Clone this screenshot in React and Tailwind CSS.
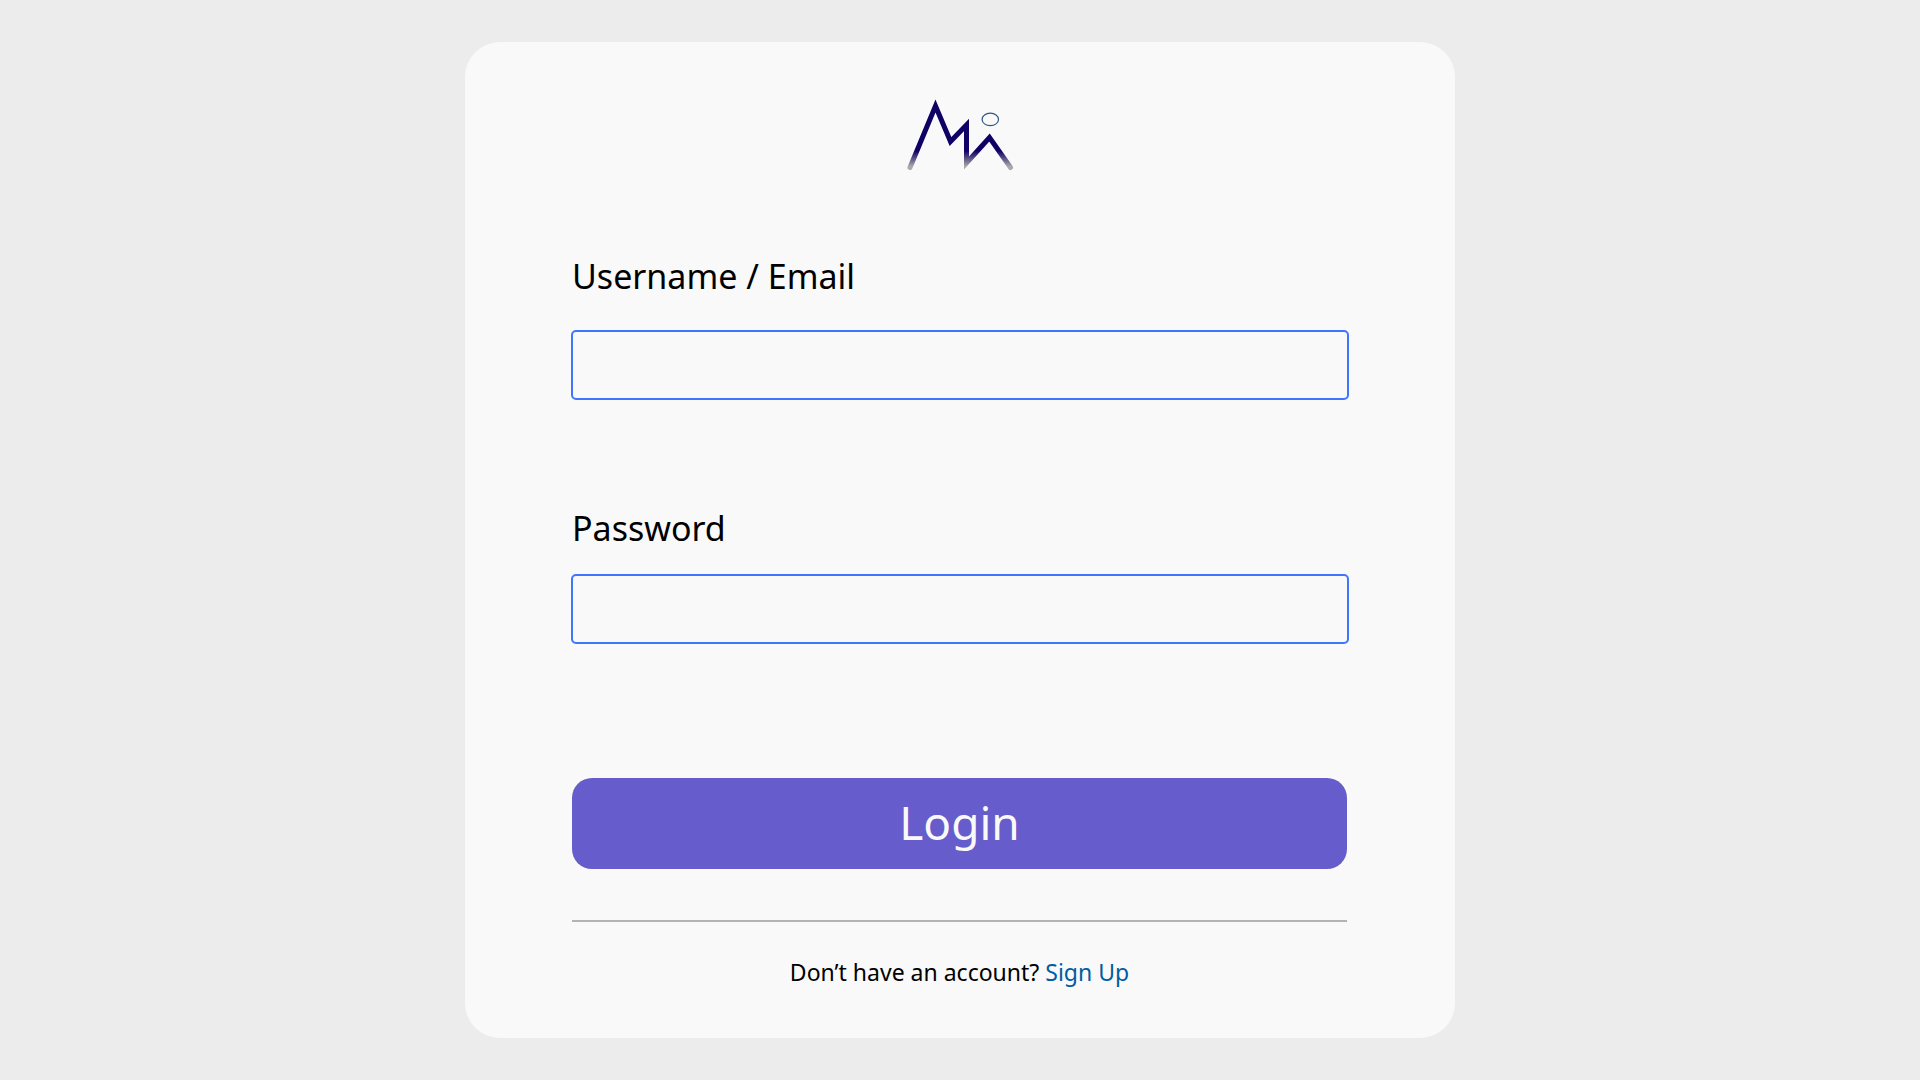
function Logo() {
  return (
    <svg viewBox="0 0 108 76" className="h-[76px] w-[108px]" fill="none" role="img" aria-label="Mountain logo">
      <defs>
        <linearGradient id="ridge" gradientUnits="userSpaceOnUse" x1="0" y1="6" x2="0" y2="76">
          <stop offset="0.7" stopColor="#0f0066" />
          <stop offset="0.92" stopColor="#a9a9a9" />
        </linearGradient>
      </defs>
      <path
        d="M4 71.5 L29.5 10 L44.5 45.5 L60.5 29 V67 L83.5 41.5 L104.5 71.5"
        stroke="url(#ridge)"
        strokeWidth="5"
        strokeLinecap="round"
        strokeMiterlimit="10"
      />
      <ellipse cx="84.3" cy="23.4" rx="8.2" ry="6.3" stroke="#2f5585" strokeWidth="1.2" />
    </svg>
  );
}

function Field({ id, label, type, className }) {
  return (
    <div className={`flex flex-col ${className}`}>
      <label htmlFor={id} className="px-px text-[34px] leading-12 text-black">
        {label}
      </label>
      <input
        id={id}
        name={id}
        type={type}
        className="h-[70px] w-full rounded-[5px] border-2 border-[#3f76ff] bg-transparent px-4 text-3xl outline-none"
      />
    </div>
  );
}

export default function App() {
  return (
    <main className="flex min-h-screen items-center justify-center bg-[#ececec] font-['Noto_Sans',sans-serif]">
      <form
        className="flex w-full max-w-[990px] flex-col rounded-[35px] bg-[#f9f9f9] px-[106px] pt-[54px] pb-[46px]"
        onSubmit={(e) => e.preventDefault()}
      >
        <div className="flex justify-center">
          <Logo />
        </div>
        <Field id="username" label="Username / Email" type="text" className="mt-[80px] gap-[30px]" />
        <Field id="password" label="Password" type="password" className="mt-[104px] gap-[22px]" />
        <div className="mt-[134px] flex flex-col pr-0.5 pl-px">
          <button type="submit" className="h-[91px] rounded-[20px] bg-[#665ccb] pb-1 text-[46px] leading-none text-[#f9f9f9]">
            Login
          </button>
          <hr className="mt-[51px] border-t-2 border-[#b3b3b3]" />
          <p className="mt-[30px] text-center text-[23px] leading-10 text-black">
            Don’t have an account?{" "}
            <a href="#signup" className="text-[#005ca3]">
              Sign Up
            </a>
          </p>
        </div>
      </form>
    </main>
  );
}
